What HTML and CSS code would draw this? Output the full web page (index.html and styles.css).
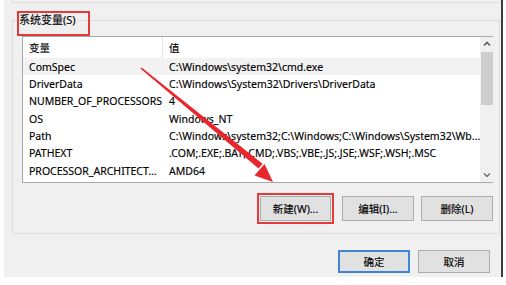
FILE: index.html
```html
<!DOCTYPE html>
<html lang="zh-CN">
<head>
<meta charset="utf-8">
<title>系统变量</title>
<link rel="stylesheet" href="styles.css">
</head>
<body>
<div class="dialog">
  <div class="prev-group"></div>
  <div class="group">
    <div class="group-label">系统变量(S)</div>
    <div class="mark mark-label"></div>
    <div class="listbox">
      <div class="list">
        <div class="row head"><div class="c1">变量</div><div class="c2">值</div></div>
        <div class="row sel"><div class="c1">ComSpec</div><div class="c2">C:\Windows\system32\cmd.exe</div></div>
        <div class="row"><div class="c1">DriverData</div><div class="c2">C:\Windows\System32\Drivers\DriverData</div></div>
        <div class="row"><div class="c1">NUMBER_OF_PROCESSORS</div><div class="c2">4</div></div>
        <div class="row"><div class="c1">OS</div><div class="c2">Windows_NT</div></div>
        <div class="row"><div class="c1">Path</div><div class="c2">C:\Windows\system32;C:\Windows;C:\Windows\System32\Wb...</div></div>
        <div class="row"><div class="c1">PATHEXT</div><div class="c2">.COM;.EXE;.BAT;.CMD;.VBS;.VBE;.JS;.JSE;.WSF;.WSH;.MSC</div></div>
        <div class="row"><div class="c1">PROCESSOR_ARCHITECT...</div><div class="c2">AMD64</div></div>
      </div>
      <div class="scrollbar">
        <svg class="arrow" width="14" height="14" viewBox="0 0 14 14"><path d="M4 8.5 L7 5.5 L10 8.5" fill="none" stroke="#606060" stroke-width="1.6"/></svg>
        <div class="track"><div class="thumb"></div></div>
        <svg class="arrow" width="14" height="14" viewBox="0 0 14 14"><path d="M4 5.5 L7 8.5 L10 5.5" fill="none" stroke="#606060" stroke-width="1.2"/></svg>
      </div>
    </div>
    <div class="btn-row">
      <div class="btn-wrap marked"><button class="btn">新建(W)...</button></div>
      <button class="btn">编辑(I)...</button>
      <button class="btn">删除(L)</button>
    </div>
  </div>
  <div class="footer">
    <button class="btn btn-default">确定</button>
    <button class="btn">取消</button>
  </div>
  <svg class="annot" width="502" height="285" viewBox="0 0 502 285">
    <polygon points="140.4,68.6 141.6,67.4 262.5,163.8 258.5,168.6" fill="#e8262b"/>
    <polygon points="273,182 254.5,175.5 264.5,164" fill="#e8262b"/>
  </svg>
</div>
</body>
</html>
```

FILE: styles.css
```css
* { box-sizing: border-box; }
html, body {
  margin: 0;
  padding: 0;
  background: #ffffff;
}
body {
  font-family: "Noto Sans", "Noto Sans CJK SC", sans-serif;
  font-size: 10.5px;
  color: #000;
  -webkit-text-stroke: 0.15px #000;
}
.dialog {
  position: relative;
  margin-left: 4px;
  width: 499px;
  height: 277px;
  background: #f0f0f0;
  border-right: 2px solid #3c3c3c;
  padding-top: 0;
}
.prev-group {
  margin-left: 8px;
  width: 488px;
  height: 3px;
  border-left: 1px solid #dcdcdc;
  border-bottom: 1px solid #dcdcdc;
}
.group {
  position: relative;
  margin: 17px 0 0 8px;
  width: 488px;
  height: 214px;
  border: 1px solid #dcdcdc;
  padding: 15px 0 0 9px;
}
.group-label {
  position: absolute;
  left: 5px;
  top: -9px;
  padding: 0 1px;
  background: #f0f0f0;
  line-height: 16px;
  font-size: 11px;
}
.mark {
  position: absolute;
  border: 2px solid #e53a3a;
}
.mark-label {
  left: 4px;
  top: -10px;
  width: 73px;
  height: 25px;
}
.listbox {
  display: flex;
  width: 471px;
  height: 147px;
  border: 1px solid #a9a9a9;
  background: #ffffff;
}
.list {
  flex: 1;
  display: flex;
  flex-direction: column;
}
.row {
  display: flex;
  height: 17.33px;
  align-items: center;
  white-space: nowrap;
}
.row.head {
  height: 21px;
}
.row.sel {
  background: #f2f2f2;
}
.c1 {
  width: 140px;
  padding-left: 6px;
  overflow: hidden;
}
.head .c1 {
  height: 100%;
  display: flex;
  align-items: center;
  border-right: 1px solid #e5e5e5;
}
.c2 {
  padding-left: 6px;
}
.scrollbar {
  width: 14px;
  display: flex;
  flex-direction: column;
  background: #f0f0f0;
}
.arrow {
  display: block;
  flex: none;
}
.track {
  flex: 1;
  padding-top: 1px;
}
.thumb {
  margin: 0 1px;
  height: 53px;
  background: #cdcdcd;
}
.btn-row {
  display: flex;
  justify-content: flex-end;
  gap: 7px;
  width: 471px;
  margin-top: 13px;
}
.btn {
  font: inherit;
  color: #000;
  width: 72px;
  height: 25px;
  padding: 0;
  background: #e1e1e1;
  border: 1px solid #adadad;
}
.btn-row .btn { width: 72px; }
.btn-wrap.marked {
  padding: 1px;
  border: 2px solid #e53a3a;
  margin: -3px 1px -3px 0;
}
.btn-wrap .btn {
  width: 71px;
  display: block;
}
.footer {
  display: flex;
  justify-content: flex-end;
  gap: 8px;
  padding-right: 11px;
  margin-top: 16px;
}
.footer .btn {
  width: 72px;
  height: 23px;
}
.btn-default {
  border: 2px solid #3d86d3;
}
.annot {
  position: absolute;
  left: -4px;
  top: 0;
  pointer-events: none;
}
```
